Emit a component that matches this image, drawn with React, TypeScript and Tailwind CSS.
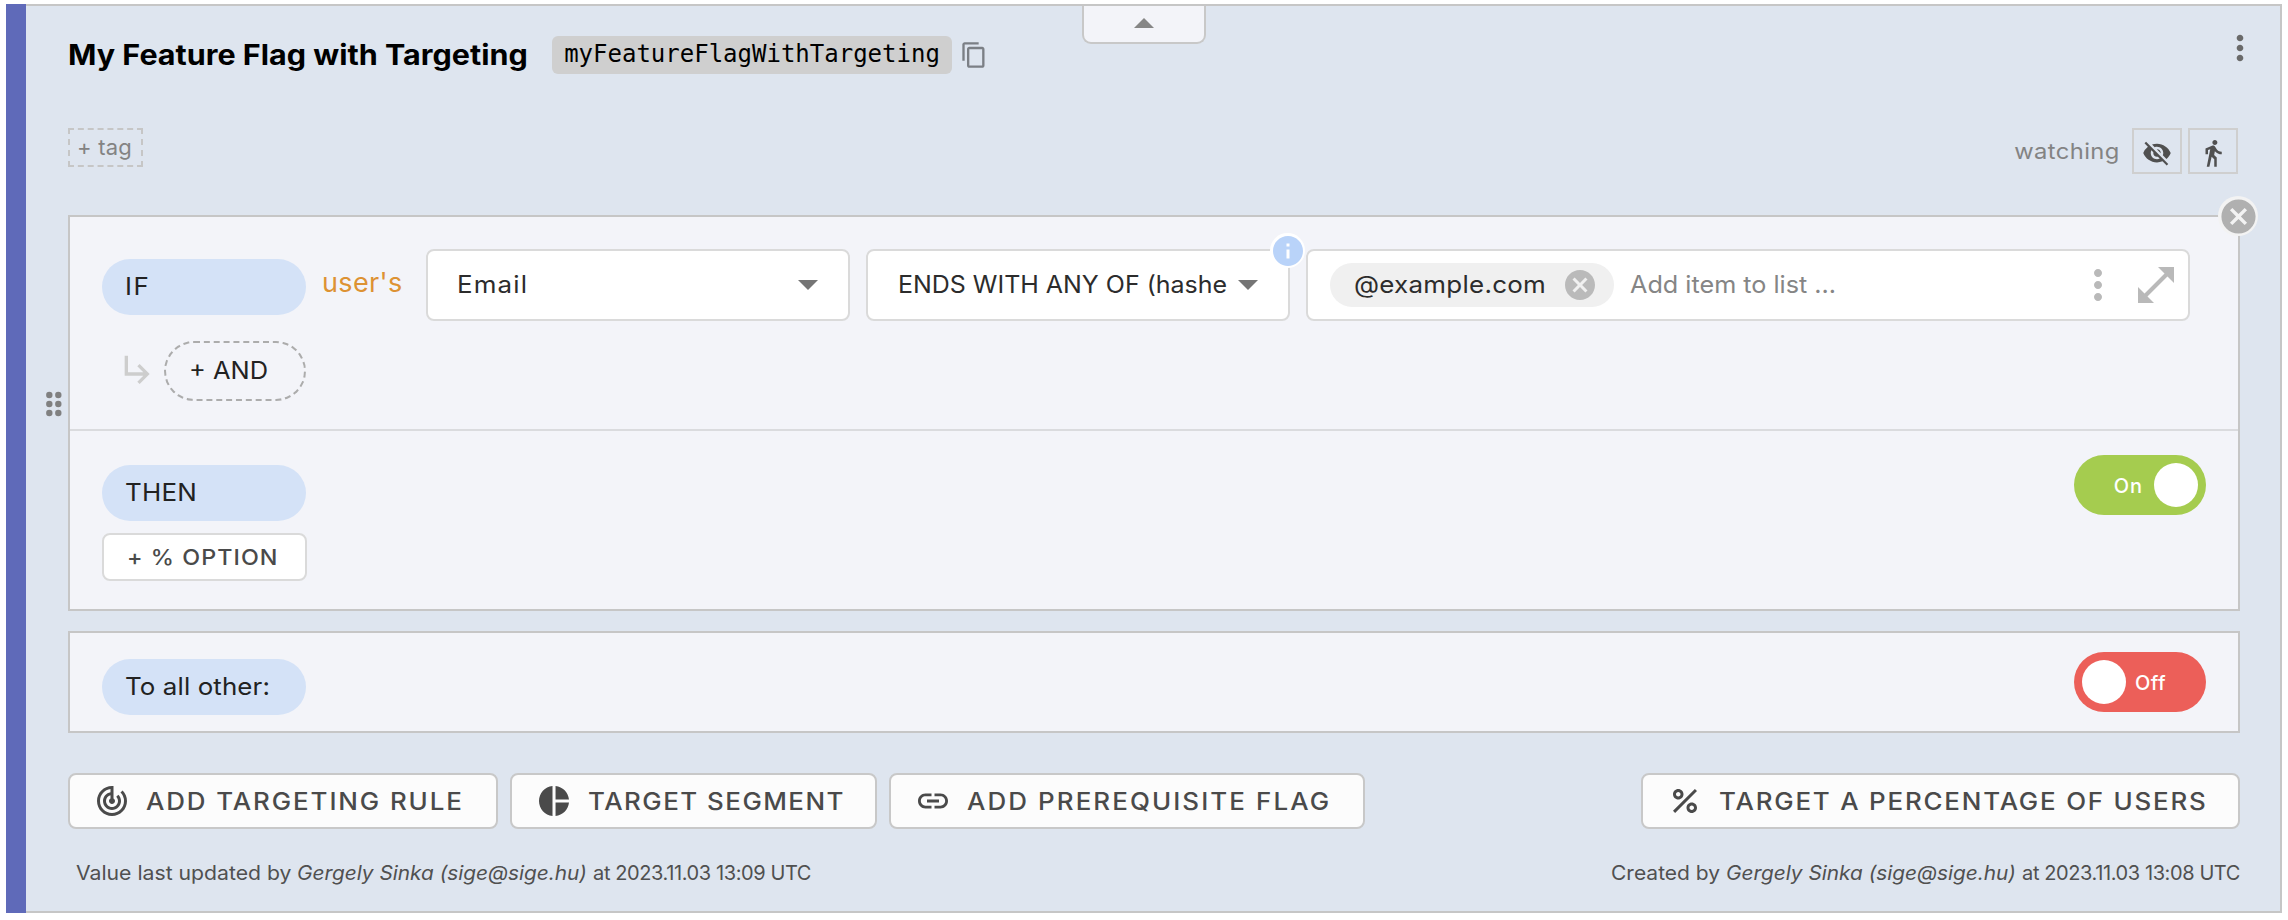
import type { ReactNode } from "react";
import {
  MdCancel,
  MdContentCopy,
  MdDirectionsWalk,
  MdInfo,
  MdLink,
  MdMoreVert,
  MdPercent,
  MdPieChart,
  MdSubdirectoryArrowRight,
  MdTrackChanges,
  MdVisibilityOff,
} from "react-icons/md";

function Wide({ children, className = "" }: { children: ReactNode; className?: string }) {
  return <span className={`inline-block origin-left scale-x-108 ${className}`}>{children}</span>;
}

function Pill({ children, className = "" }: { children: ReactNode; className?: string }) {
  return (
    <div className={`flex h-14 w-[204px] shrink-0 items-center rounded-full bg-[#d4e2f7] pl-[23px] text-[24px] text-[#222] ${className}`}>
      <Wide>{children}</Wide>
    </div>
  );
}

function Caret({ up = false }: { up?: boolean }) {
  return (
    <svg width="20" height="10" viewBox="0 0 20 10" className="shrink-0">
      <path d={up ? "M0 10 10 0l10 10z" : "M0 0h20L10 10z"} fill={up ? "#868686" : "#757575"} />
    </svg>
  );
}

function ActionButton({ icon, children, className }: { icon: ReactNode; children: ReactNode; className: string }) {
  return (
    <button
      className={`flex h-14 shrink-0 items-center gap-4 rounded-lg border-2 border-[#c8c8c8] bg-[#fcfcfc] pl-6 text-[24px] font-[450] text-[#4a4a4a] ${className}`}
    >
      {icon}
      <Wide className="pt-0.5">{children}</Wide>
    </button>
  );
}

function Toggle({ on }: { on: boolean }) {
  return on ? (
    <div className="flex h-[60px] w-[132px] items-center justify-end gap-[11px] rounded-full bg-[#a5cc4f] pr-2 text-[20px] font-medium tracking-[1px] text-white">
      <span className="pt-px">On</span>
      <span className="size-11 rounded-full bg-white" />
    </div>
  ) : (
    <div className="flex h-[60px] w-[132px] items-center gap-[9px] rounded-full bg-[#ec5f59] pl-2 text-[20px] font-medium tracking-[0.45px] text-white">
      <span className="size-11 rounded-full bg-white" />
      <span className="pt-px">Off</span>
    </div>
  );
}

function DragHandle() {
  return (
    <svg width="18" height="26" viewBox="0 0 18 26" fill="#808080" className="absolute top-[174px] -left-[25px]">
      {[4, 13, 22].map((y) => (
        <g key={y}>
          <circle cx="4.3" cy={y} r="3.2" />
          <circle cx="13.3" cy={y} r="3.2" />
        </g>
      ))}
    </svg>
  );
}

export default function App() {
  return (
    <div className="flex h-[920px] w-[2288px] overflow-hidden bg-white pt-1 pl-1.5 font-['Inter','Liberation_Sans',sans-serif] whitespace-nowrap">
      <div className="h-[909px] w-5 shrink-0 bg-[#5f6ab9]" />
      <main className="relative h-[909px] w-[2256px] border-y-2 border-r-2 border-[#c6c6c6] bg-[#dee5ef] pt-[30px] pr-10 pl-[42px]">
        <button className="absolute top-0 left-[1056px] flex h-[38px] w-[124px] justify-center rounded-b-[9px] border-x-2 border-b-2 border-[#c8c8c8] bg-[#f3f4f9] pt-3">
          <Caret up />
        </button>

        <header className="flex h-[38px] items-center">
          <h1 className="w-[484px] text-[28px] font-bold text-black">
            <span className="inline-block origin-left scale-x-109">My Feature Flag with Targeting</span>
          </h1>
          <code className="flex h-[38px] w-[400px] items-center justify-center rounded-md bg-[#cfcfcf] pb-0.5 font-['DejaVu_Sans_Mono',monospace] text-[24px] text-black">
            myFeatureFlagWithTargeting
          </code>
          <MdContentCopy className="ml-2 size-7 text-[#7b7f85]" />
          <MdMoreVert className="mr-[-20px] mb-[14px] ml-auto size-10 text-[#6a6a6a]" />
        </header>

        <div className="mt-[54px] flex h-[46px] justify-between">
          <button className="flex h-[39px] w-[75px] items-center border-2 border-dashed border-[#c6c6c6] pl-[7px] text-[22px] tracking-[0.2px] text-[#838383]">
            + tag
          </button>
          <div className="mr-0.5 flex items-center">
            <span className="mr-3 inline-block origin-right scale-x-108 text-[22px] tracking-[0.37px] text-[#838383]">watching</span>
            <button className="mr-1.5 flex h-[46px] w-[50px] items-center justify-center border-2 border-[#cfcfcf] pt-1">
              <MdVisibilityOff className="size-[30px] text-[#505050]" />
            </button>
            <button className="flex h-[46px] w-[50px] items-center justify-center border-2 border-[#cfcfcf] pt-1">
              <MdDirectionsWalk className="size-[30px] text-[#505050]" />
            </button>
          </div>
        </div>

        <section className="relative mt-[41px] h-[396px] border-2 border-[#c6c6c6] bg-[#f3f4f9]">
          <DragHandle />
          <div className="absolute -top-[21px] -right-[20px] flex size-10 items-center justify-center rounded-full bg-[#f3f3f3]">
            <MdCancel className="size-[41px] shrink-0 text-[#b0b0b0]" />
          </div>

          <div className="h-[214px] border-b-2 border-[#dadbde] pt-8 pr-12 pl-8">
            <div className="flex h-[72px] items-center">
              <Pill className="mt-1 tracking-[1.5px]">IF</Pill>
              <span className="mb-1 w-[120px] pl-4 text-[27px] tracking-[0.36px] text-[#dd9233]">user's</span>
              <div className="mr-4 flex h-[72px] w-[424px] items-center justify-between rounded-lg border-2 border-[#dadada] bg-white pr-[30px] pl-[29px] text-[24px] text-[#2c2c2c]">
                <Wide className="tracking-[1.08px]">Email</Wide>
                <Caret />
              </div>
              <div className="relative mr-4 flex h-[72px] w-[424px] items-center justify-between rounded-lg border-2 border-[#dadada] bg-white pr-[30px] pl-[30px] text-[24px] text-[#2c2c2c]">
                <span className="inline-block origin-left scale-x-104">ENDS WITH ANY OF (hashe</span>
                <Caret />
                <div className="absolute -top-[18px] -right-[17px] flex size-[35px] items-center justify-center rounded-full bg-white">
                  <MdInfo className="size-9 shrink-0 text-[#b9d3f9]" />
                </div>
              </div>
              <div className="flex h-[72px] w-[884px] items-center rounded-lg border-2 border-[#dadada] bg-white pl-[22px] text-[24px]">
                <div className="flex h-11 w-[284px] items-center justify-between rounded-full bg-[#f0f0f0] pr-4 pl-6 text-[#2c2c2c]">
                  <Wide className="tracking-[0.25px]">@example.com</Wide>
                  <MdCancel className="size-9 text-[#bababa]" />
                </div>
                <span className="ml-4 inline-block origin-left scale-x-105 text-[#858585]">Add item to list ...</span>
                <MdMoreVert className="ml-auto size-12 text-[#b9b9b9]" />
                <svg width="36" height="36" viewBox="0 0 36 36" fill="#b9b9b9" className="mr-[14px] ml-4">
                  <path d="M20 0h16v16zM0 20v16h16z" />
                  <path d="M7 29 29 7" stroke="#b9b9b9" strokeWidth="4" />
                </svg>
              </div>
            </div>
            <div className="mt-5 flex h-[60px] items-center pl-4">
              <MdSubdirectoryArrowRight className="mr-[6px] mb-1 size-10 text-[#cdcdcd]" />
              <button className="flex h-[60px] w-[142px] items-center rounded-full border-2 border-dashed border-[#acacac] pl-[23px] text-[24px] text-[#222]">
                <span className="inline-block origin-left scale-x-106">+ AND</span>
              </button>
            </div>
          </div>

          <div className="flex justify-between pr-8 pl-8">
            <div className="pt-[34px]">
              <Pill className="tracking-[0.2px]">THEN</Pill>
              <button className="mt-3 flex h-12 w-[205px] items-center rounded-lg border-2 border-[#dadada] bg-white pl-[23px] text-[22px] font-[450] tracking-[0.98px] text-[#4a4a4a]">
                <span className="inline-block origin-left scale-x-106">+ % OPTION</span>
              </button>
            </div>
            <div className="pt-6">
              <Toggle on />
            </div>
          </div>
        </section>

        <section className="mt-5 flex h-[102px] justify-between border-2 border-[#c6c6c6] bg-[#f3f4f9] px-8">
          <Pill className="mt-[26px] tracking-[0.1px]">To all other:</Pill>
          <div className="pt-[19px]">
            <Toggle on={false} />
          </div>
        </section>

        <div className="mt-10 flex">
          <ActionButton className="mr-3 w-[430px] tracking-[1.75px]" icon={<MdTrackChanges className="size-9" />}>
            ADD TARGETING RULE
          </ActionButton>
          <ActionButton className="mr-3 w-[367px] tracking-[1.37px]" icon={<MdPieChart className="size-9" />}>
            TARGET SEGMENT
          </ActionButton>
          <ActionButton className="w-[476px] tracking-[1.93px]" icon={<MdLink className="size-9" />}>
            ADD PREREQUISITE FLAG
          </ActionButton>
          <ActionButton className="ml-auto w-[599px] tracking-[1.66px]" icon={<MdPercent className="size-9" />}>
            TARGET A PERCENTAGE OF USERS
          </ActionButton>
        </div>

        <footer className="mt-[29px] flex justify-between pl-2 text-[20px] leading-[30px] text-[#505050]">
          <p className="flex gap-1.5">
            <span className="mr-3 inline-block origin-left scale-x-106">Value last updated by</span>
            <em className="mr-[11px] inline-block origin-left scale-x-104">Gergely Sinka (sige@sige.hu)</em>
            <span className="tracking-[-0.4px]">at 2023.11.03 13:09 UTC</span>
          </p>
          <p className="flex gap-1.5">
            <span className="mr-[5px] inline-block origin-left scale-x-105">Created by</span>
            <em className="mr-[11px] inline-block origin-left scale-x-104">Gergely Sinka (sige@sige.hu)</em>
            <span className="tracking-[-0.4px]">at 2023.11.03 13:08 UTC</span>
          </p>
        </footer>
      </main>
    </div>
  );
}
